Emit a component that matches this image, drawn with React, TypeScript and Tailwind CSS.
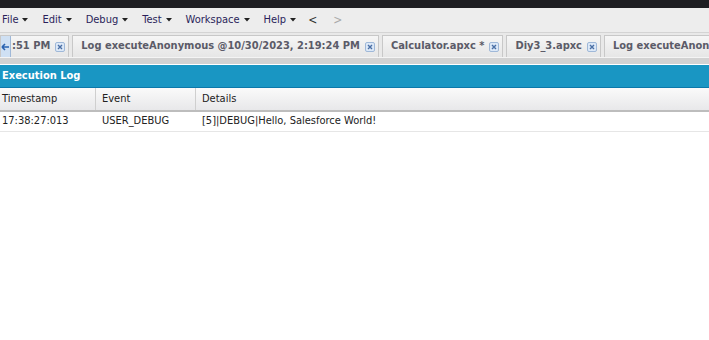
import { useState } from "react";

const menus = ["File", "Edit", "Debug", "Test", "Workspace", "Help"];

const tabs = [
  { label: ":51 PM", first: true },
  { label: "Log executeAnonymous @10/30/2023, 2:19:24 PM" },
  { label: "Calculator.apxc *" },
  { label: "Diy3_3.apxc" },
  { label: "Log executeAnonymous @10/30/2023", last: true },
];

function CloseIcon() {
  return (
    <span className="ml-[5px] flex h-[10px] w-[10px] shrink-0 items-center justify-center rounded-[2px] border border-[#9fb8d8] bg-[#dce8f7]">
      <svg width="6" height="6" viewBox="0 0 6 6">
        <path d="M1 1L5 5M5 1L1 5" stroke="#4a6fa5" strokeWidth="1.4" />
      </svg>
    </span>
  );
}

function MenuBar() {
  return (
    <div className="flex h-[25px] items-center border-b border-[#d4d4d4] bg-[#ededed] pl-[2px] text-[11px] text-[#2a1f5a]">
      {menus.map((m, i) => (
        <div key={m} className={`flex items-center ${i === menus.length - 1 ? "mr-[12px]" : "mr-[14px]"}`}>
          {m}
          <svg className="ml-[4px]" width="6" height="4" viewBox="0 0 6 4">
            <path d="M0 0H6L3 3.5Z" fill="#222" />
          </svg>
        </div>
      ))}
      <span className="text-[12px] text-[#333]">&lt;</span>
      <span className="ml-[16px] text-[12px] text-[#aaa]">&gt;</span>
    </div>
  );
}

function TabStrip() {
  return (
    <div className="flex h-[24px] items-end gap-[3px] overflow-hidden bg-[#e9e9e9]">
      {tabs.map((t) => (
        <div
          key={t.label}
          className={`flex h-[22px] shrink-0 items-center border border-b-0 border-[#c8c8c8] bg-gradient-to-b from-[#f6f6f6] to-[#e6e6e6] pr-[3px] text-[11px] font-bold text-[#5b5b68] ${
            t.first ? "pl-0" : "pl-[8px]"
          }`}
        >
          {t.first && (
            <span className="mr-[1px] flex h-full w-[10px] items-center justify-center border-r border-[#9fb8d8] bg-[#cfe0f3]">
              <svg width="9" height="8" viewBox="0 0 9 8">
                <path d="M1 4H8M1 4L4 1M1 4L4 7" stroke="#2a62b0" strokeWidth="1.6" fill="none" />
              </svg>
            </span>
          )}
          <span className="whitespace-nowrap">{t.label}</span>
          {!t.last && <CloseIcon />}
        </div>
      ))}
    </div>
  );
}

export default function App() {
  const [rows] = useState([
    { ts: "17:38:27:013", ev: "USER_DEBUG", details: "[5]|DEBUG|Hello, Salesforce World!" },
  ]);

  return (
    <div
      className="flex h-[340px] w-[709px] flex-col overflow-hidden bg-white"
      style={{ fontFamily: "'DejaVu Sans Condensed', Tahoma, 'DejaVu Sans', sans-serif" }}
    >
      <div className="h-[8px] bg-[#1e1e22]" />
      <MenuBar />
      <TabStrip />
      <div className="h-[7px] border-t border-[#f4f4f4] bg-[#d2d2d2]" />
      <div className="border-t border-white">
        <div className="flex h-[23px] items-center border-b border-[#0b78aa] bg-[#1996c3] pl-[2px] text-[11px] font-bold text-white">
          Execution Log
        </div>
      </div>
      <div className="flex h-[24px] border-b-2 border-[#bdbdbd] bg-gradient-to-b from-[#fafafa] to-[#e8e8ea] text-[11px] text-[#222]">
        <div className="flex w-[96px] items-center border-r border-[#cfcfcf] pl-[2px]">Timestamp</div>
        <div className="flex w-[100px] items-center border-r border-[#cfcfcf] pl-[6px]">Event</div>
        <div className="flex flex-1 items-center pl-[6px]">Details</div>
      </div>
      {rows.map((r) => (
        <div key={r.ts} className="flex h-[20px] items-center border-b border-[#e6e6e6] text-[11px] text-[#222]">
          <div className="w-[96px] pl-[2px]">{r.ts}</div>
          <div className="w-[100px] pl-[6px]">{r.ev}</div>
          <div className="flex-1 pl-[6px]">{r.details}</div>
        </div>
      ))}
    </div>
  );
}
